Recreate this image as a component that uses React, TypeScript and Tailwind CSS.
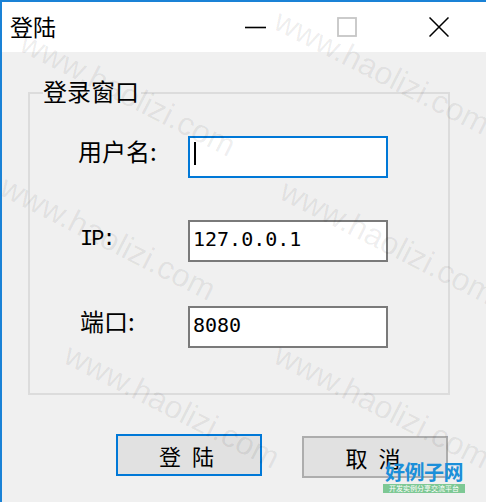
import React from "react";

const wm = [
  { x: 28, y: 24 },
  { x: 282, y: 2 },
  { x: 8, y: 168 },
  { x: 288, y: 172 },
  { x: 72, y: 336 },
  { x: 282, y: 336 },
];

export default function App() {
  return (
    <div className="relative w-[486px] h-[502px] overflow-hidden bg-[#f0f0f0] border-l-2 border-t-2 border-[#1a82d6] font-['Noto_Sans_CJK_SC',sans-serif] text-black">
      {/* title bar */}
      <div className="flex h-[50px] items-center bg-white">
        <div className="flex-1 pl-[8px] pb-[2px] text-[23px] leading-none">登陆</div>
        <div className="flex h-full w-[92px] items-center justify-center">
          <svg width="21" height="20" viewBox="0 0 21 20">
            <line x1="0" y1="10.5" x2="21" y2="10.5" stroke="#000" strokeWidth="1.6" />
          </svg>
        </div>
        <div className="flex h-full w-[92px] items-center justify-center">
          <svg width="20" height="20" viewBox="0 0 20 20">
            <rect x="1" y="1" width="18" height="18" fill="none" stroke="#c6c6c6" strokeWidth="1.8" />
          </svg>
        </div>
        <div className="mr-[1px] flex h-full w-[92px] items-center justify-center">
          <svg width="20" height="20" viewBox="0 0 20 20">
            <path d="M0.5 0.5 L19.5 19.5 M19.5 0.5 L0.5 19.5" stroke="#000" strokeWidth="1.5" fill="none" />
          </svg>
        </div>
      </div>

      {/* group box */}
      <div className="relative ml-[26px] mt-[40px] h-[303px] w-[422px] border-2 border-[#dcdcdc] pt-[42px]">
        <span className="absolute left-[13px] top-[-15px] bg-[#f0f0f0] pr-[2px] text-[24px] leading-[24px]">
          登录窗口
        </span>

        <div className="flex h-[42px] pl-[48px]">
          <div className="mt-[3px] w-[110px] text-[24px] leading-[24px]">用户名:</div>
          <div className="h-[42px] w-[200px] border-2 border-[#0078d7] bg-white">
            <div className="ml-[4px] mt-[4px] h-[23px] w-[2px] bg-black" />
          </div>
        </div>

        <div className="mt-[42px] flex h-[42px] pl-[50px]">
          <div className="mt-[8px] w-[108px] font-['Liberation_Mono',monospace] text-[22px] leading-[24px] tracking-[-2px]">IP:</div>
          <div className="flex h-[42px] w-[200px] items-center border-2 border-[#7a7a7a] bg-white pb-[4px] pl-[3px] font-['DejaVu_Sans_Mono',monospace] text-[20px] leading-none">
            127.0.0.1
          </div>
        </div>

        <div className="mt-[44px] flex h-[42px] pl-[50px]">
          <div className="mt-[3px] w-[108px] text-[24px] leading-[24px]">端口:</div>
          <div className="flex h-[42px] w-[200px] items-center border-2 border-[#7a7a7a] bg-white pb-[4px] pl-[3px] font-['DejaVu_Sans_Mono',monospace] text-[20px] leading-none">
            8080
          </div>
        </div>
      </div>

      {/* buttons */}
      <div className="mt-[39px] flex items-start">
        <button className="ml-[114px] flex h-[42px] w-[146px] items-center justify-center border-2 border-[#0078d7] bg-[#e1e1e1] pr-[5px] text-[22px] leading-none [word-spacing:6px]">
          登 陆
        </button>
        <button className="ml-[40px] mt-[2px] flex h-[42px] w-[146px] items-center justify-center border-2 border-[#adadad] bg-[#e1e1e1] pr-[4px] text-[22px] leading-none [word-spacing:6px]">
          取 消
        </button>
      </div>

      {/* logo */}
      <div className="absolute left-[381px] top-[459px] flex w-[82px] flex-col items-center">
        <div className="text-[20px] font-bold leading-[22px] tracking-[-0.5px] text-[#1c8fd9]">好例子网</div>
        <div className="mt-[1px] flex h-[9px] w-[82px] items-center justify-center bg-[#7dc894] text-[7px] leading-none text-white">
          开发实例分享交流平台
        </div>
      </div>

      {/* watermark */}
      {wm.map((p, i) => (
        <span
          key={i}
          className="pointer-events-none absolute origin-top-left rotate-[27deg] whitespace-nowrap font-['Liberation_Sans',sans-serif] text-[32px] leading-none text-black/[0.07]"
          style={{ left: p.x, top: p.y }}
        >
          www.haolizi.com
        </span>
      ))}
    </div>
  );
}
